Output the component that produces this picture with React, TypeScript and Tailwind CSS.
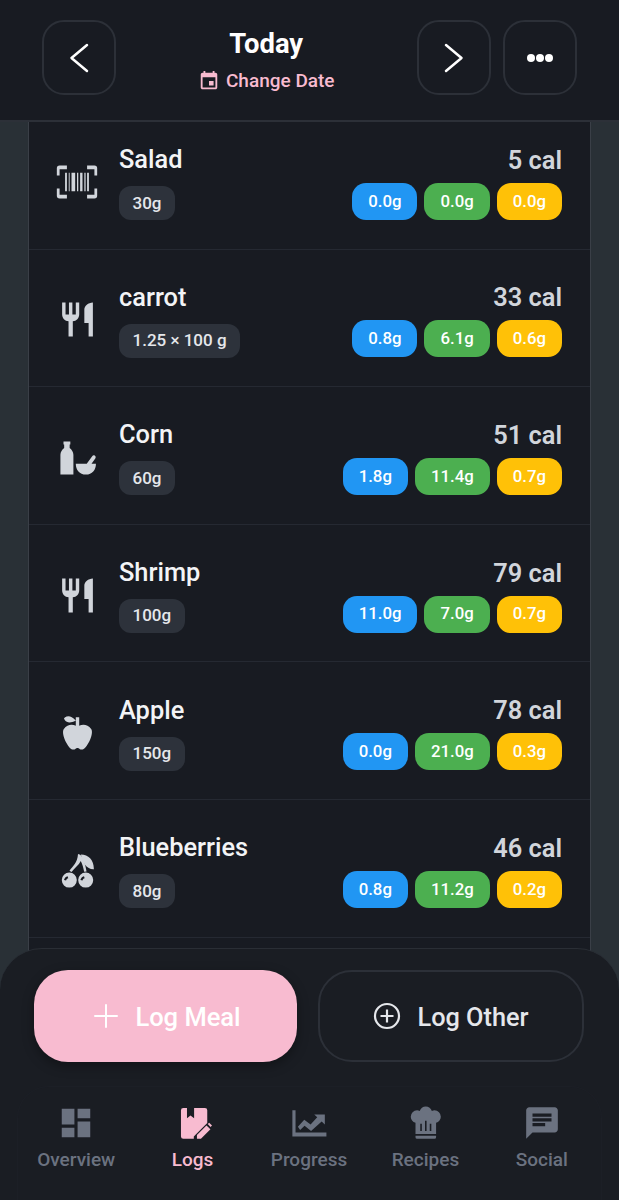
import React from 'react'

const barcodePath = 'M5.5,7H6.5V17H5.5V7M7.5,7H8V17H7.5V7M9,7H11V17H9V7M12,7H12.7V17H12V7M13.7,7H15V17H13.7V7M16,7H16.7V17H16V7M17.5,7H18.5V17H17.5V7M2.5,5V8.5H1V4.5A1.5,1.5 0 0,1 2.5,3H6.5V5H2.5M21.5,3A1.5,1.5 0 0,1 23,4.5V8.5H21.5V5H17.5V3H21.5M2.5,15.5V19H6.5V21H2.5A1.5,1.5 0 0,1 1,19.5V15.5H2.5M21.5,19V15.5H23V19.5A1.5,1.5 0 0,1 21.5,21H17.5V19H21.5Z'
const forkKnifePath = 'M11,9H9V2H7V9H5V2H3V9C3,11.12 4.66,12.84 6.75,12.97V22H9.25V12.97C11.34,12.84 13,11.12 13,9V2H11V9M16,6V14H18.5V22H21V2C18.24,2 16,4.24 16,6Z'
const applePath = 'M20,10C22,13 17,22 15,22C13,22 13,21 12,21C11,21 11,22 9,22C7,22 2,13 4,10C6,7 9,7 11,8V5C5.38,8.07 4.11,3.78 4.11,3.78C4.11,3.78 6.77,0.19 11,5V3H13V8C15,7 18,7 20,10Z'

const Icon = ({ d, size, className }: { d: string; size: number; className?: string }) => (
    <svg width={size} height={size} viewBox="0 0 24 24" fill="currentColor" className={className}>
        <path d={d} />
    </svg>
)

const BottleBowl = () => (
    <svg width={41} height={41} viewBox="0 0 24 24" fill="currentColor">
        <path d="M3.8 2.6H7.8V4.4H7.4V6.4C8.6 7.4 9.6 8.6 9.6 10.4V22H2V10.4C2 8.6 3 7.4 4.2 6.4V4.4H3.8Z" />
        <path d="M11 15.6H17.4L20.6 11.2C21 10.7 21.7 10.6 22.2 11C22.7 11.4 22.8 12 22.4 12.6L20.2 15.6H22.8C22.8 19.2 20.6 22 16.9 22C13.2 22 11 19.2 11 15.6Z" />
    </svg>
)

const Cherries = () => (
    <svg width={41} height={41} viewBox="0 0 24 24" fill="currentColor">
        <path fillRule="evenodd" d="M7.2 13.2A4.4 4.4 0 1 1 7.2 22A4.4 4.4 0 1 1 7.2 13.2ZM6.2 15.4C5.1 15.7 4.4 16.5 4.1 17.6L5.3 17.9C5.5 17.2 5.9 16.8 6.6 16.6ZM16.8 13.2A4.4 4.4 0 1 1 16.8 22A4.4 4.4 0 1 1 16.8 13.2ZM15.8 15.4C14.7 15.7 14 16.5 13.7 17.6L14.9 17.9C15.1 17.2 15.5 16.8 16.2 16.6Z" />
        <path d="M12.3 2.4L13.6 2.8C15.7 5 16.6 8.6 17.3 12.6L15.9 12.8C15.4 10.2 14.9 8.2 13.9 6.4C12.8 8.8 10.2 10.6 8.5 12.9L7.3 12.1C9.2 9.6 12 7.6 12.3 2.4Z" />
        <path d="M14 2.6C18.4 2.6 21.4 5.6 21.6 11.2C17.4 11.4 15 7.8 14 2.6Z" />
    </svg>
)

const LogsIcon = () => (
    <svg width={38} height={38} viewBox="0 0 24 24" fill="currentColor" className="text-[#f8bbd0]">
        <path d="M5.9 2.5H8.2V9L10.4 7.2L12.7 9V2.5H19.5A1.5 1.5 0 0 1 21 4V12L12.5 20.5V22H5.9A1.5 1.5 0 0 1 4.4 20.5V4A1.5 1.5 0 0 1 5.9 2.5Z" />
        <path d="M14.5 22V19.5L20.5 13.5L23 16L17 22Z" />
        <path d="M21.3 12.7L22.2 11.8L24 13.6L23.1 14.5Z" />
    </svg>
)

const ProgressIcon = () => (
    <svg width={38} height={38} viewBox="0 0 24 24" fill="currentColor">
        <path d="M1.5 4H3.5V18H23V20.5H1.5Z" />
        <path d="M5 14.4L9 10L13 13L17.2 8.4L15.3 6.6H22V13L20 11L13.3 17L9.2 13.8L6.4 16.4Z" />
    </svg>
)

const foods = [
    { name: 'Salad', amount: '30g', cal: '5 cal', macros: ['0.0g', '0.0g', '0.0g'], icon: <Icon d={barcodePath} size={44} /> },
    { name: 'carrot', amount: '1.25 × 100 g', cal: '33 cal', macros: ['0.8g', '6.1g', '0.6g'], icon: <Icon d={forkKnifePath} size={41} /> },
    { name: 'Corn', amount: '60g', cal: '51 cal', macros: ['1.8g', '11.4g', '0.7g'], icon: <BottleBowl /> },
    { name: 'Shrimp', amount: '100g', cal: '79 cal', macros: ['11.0g', '7.0g', '0.7g'], icon: <Icon d={forkKnifePath} size={41} /> },
    { name: 'Apple', amount: '150g', cal: '78 cal', macros: ['0.0g', '21.0g', '0.3g'], icon: <Icon d={applePath} size={41} /> },
    { name: 'Blueberries', amount: '80g', cal: '46 cal', macros: ['0.8g', '11.2g', '0.2g'], icon: <Cherries /> },
]

const macroColors = ['bg-[#2196f3]', 'bg-[#4caf50]', 'bg-[#ffc107]']

const navItems = [
    { label: 'Overview', icon: <Icon d="M3 13h8V3H3v10zm0 8h8v-6H3v6zm10 0h8V11h-8v10zm0-18v6h8V3h-8z" size={38} /> },
    { label: 'Logs', icon: <LogsIcon />, active: true },
    { label: 'Progress', icon: <ProgressIcon /> },
    { label: 'Recipes', icon: <Icon d="M12.5,1.5C10.73,1.5 9.17,2.67 8.67,4.37C8.14,4.13 7.58,4 7,4A4,4 0 0,0 3,8C3,9.82 4.24,11.41 6,11.87V19H19V11.87C20.76,11.41 22,9.82 22,8A4,4 0 0,0 18,4C17.42,4 16.86,4.13 16.33,4.37C15.83,2.67 14.27,1.5 12.5,1.5M12,10.5H13V17H12V10.5M9,12.5H10V17H9V12.5M15,12.5H16V17H15V12.5M6,20V21A1,1 0 0,0 7,22H18A1,1 0 0,0 19,21V20H6Z" size={38} /> },
    { label: 'Social', icon: <Icon d="M20 2H4c-1.1 0-1.99.9-1.99 2L2 22l4-4h14c1.1 0 2-.9 2-2V4c0-1.1-.9-2-2-2zM6 9h12v2H6V9zm8 5H6v-2h8v2zm4-6H6V6h12v2z" size={38} /> },
]

const HeaderButton = ({ children }: { children: React.ReactNode }) => (
    <button className="w-[74.5px] h-[75px] rounded-[22px] border-2 border-[#2c3038] flex items-center justify-center text-white">
        {children}
    </button>
)

const FoodRow = ({ food }: { food: typeof foods[number] }) => (
    <div className="h-[137.6px] shrink-0 border-b border-[#252932] flex items-center pl-[26px] pr-[28px] pt-[4px]">
        <div className="w-[44px] flex justify-center text-[#d1d5db] mr-[20px]">{food.icon}</div>
        <div className="flex-1 flex flex-col items-start">
            <p className="text-[25.4px] leading-[30px] font-medium text-[#f3f4f6]">{food.name}</p>
            <span className="mt-[12px] h-[34px] px-[13.5px] rounded-[12px] bg-[#2d323b] text-[#e5e7eb] text-[17px] font-medium flex items-center">{food.amount}</span>
        </div>
        <div className="flex flex-col items-end">
            <p className="text-[25.4px] leading-[30px] font-semibold text-[#d1d5db]">{food.cal}</p>
            <div className="mt-[8px] flex gap-[7px]">
                {food.macros.map((value, i) => (
                    <span key={i} className={`${macroColors[i]} h-[37px] px-[16px] rounded-[14px] text-white text-[16.8px] font-medium flex items-center`}>{value}</span>
                ))}
            </div>
        </div>
    </div>
)

export default function App() {
    return (
        <div className="relative w-[619px] h-[1200px] overflow-hidden bg-[#293036] flex flex-col font-['Roboto',sans-serif]">
            <header className="h-[122px] shrink-0 z-10 bg-[#181b22] border-b-2 border-[#2c3038] flex items-start pt-[20px] pl-[41.5px] pr-[42px]">
                <HeaderButton>
                    <svg width={24} height={32} viewBox="0 0 24 32" fill="none" stroke="currentColor" strokeWidth="2.5" strokeLinecap="round" strokeLinejoin="round">
                        <path d="M20 3L4.5 16L20 29" />
                    </svg>
                </HeaderButton>
                <div className="flex-1 flex flex-col items-center">
                    <p className="mt-[7px] text-[27.4px] leading-[34px] font-bold text-white">Today</p>
                    <div className="mt-[8px] flex items-center gap-[6px] text-[#f8bbd0]">
                        <Icon d="M17 12h-5v5h5v-5zM16 1v2H8V1H6v2H5c-1.11 0-1.99.9-1.99 2L3 19c0 1.1.89 2 2 2h14c1.1 0 2-.9 2-2V5c0-1.1-.9-2-2-2h-1V1h-2zm3 18H5V8h14v11z" size={22} />
                        <span className="text-[19px] leading-[24px] font-medium">Change Date</span>
                    </div>
                </div>
                <div className="flex gap-[11.5px]">
                    <HeaderButton>
                        <svg width={24} height={32} viewBox="0 0 24 32" fill="none" stroke="currentColor" strokeWidth="2.5" strokeLinecap="round" strokeLinejoin="round">
                            <path d="M4 3L19.5 16L4 29" />
                        </svg>
                    </HeaderButton>
                    <HeaderButton>
                        <svg width={26} height={8} viewBox="0 0 26 8" fill="currentColor">
                            <circle cx="4" cy="4" r="4" />
                            <circle cx="13" cy="4" r="4" />
                            <circle cx="22" cy="4" r="4" />
                        </svg>
                    </HeaderButton>
                </div>
            </header>

            <main className="flex-1 mx-[28px] overflow-hidden bg-[#181b22] border-x border-[#3a3f47] flex flex-col">
                <div className="-mt-[10px] flex flex-col">
                    {foods.map(food => <FoodRow key={food.name} food={food} />)}
                </div>
            </main>

            <div className="absolute left-0 right-0 bottom-0 h-[252px] rounded-t-[42px] bg-[#1a1d23] border-t border-[#2a2e35] flex flex-col">
                <div className="flex gap-[21px] pl-[34px] pr-[35px] pt-[21px]">
                    <button className="w-[263px] h-[92px] rounded-[34px] bg-[#f8bbd0] shadow-[0_4px_12px_rgba(0,0,0,0.35)] flex items-center justify-center gap-[17px] pl-[4px] text-white">
                        <svg width={24} height={24} viewBox="0 0 24 24" stroke="currentColor" strokeWidth="2" strokeLinecap="round">
                            <path d="M12 1V23M1 12H23" />
                        </svg>
                        <span className="pt-[3px] text-[25.5px] font-medium">Log Meal</span>
                    </button>
                    <button className="flex-1 h-[92px] rounded-[34px] border-2 border-[#2c3038] flex items-center justify-center gap-[16px] text-[#e5e7eb]">
                        <svg width={28} height={28} viewBox="0 0 28 28" fill="none" stroke="currentColor" strokeWidth="2.2">
                            <circle cx="14" cy="14" r="12" />
                            <path d="M14 7.5V20.5M7.5 14H20.5" />
                        </svg>
                        <span className="pt-[3px] text-[25.3px] font-medium">Log Other</span>
                    </button>
                </div>
                <nav className="mx-[17px] mt-[24px] flex-1 rounded-t-[32px] border border-b-0 border-[#1c1f26] grid grid-cols-5 pt-[17px] pr-[1px]">
                    {navItems.map(item => (
                        <div key={item.label} className={`flex flex-col items-center ${item.active ? 'text-[#f8bbd0]' : 'text-[#6b7280]'}`}>
                            {item.icon}
                            <span className="mt-[6px] text-[19px] leading-[24px] font-medium">{item.label}</span>
                        </div>
                    ))}
                </nav>
            </div>
        </div>
    )
}
